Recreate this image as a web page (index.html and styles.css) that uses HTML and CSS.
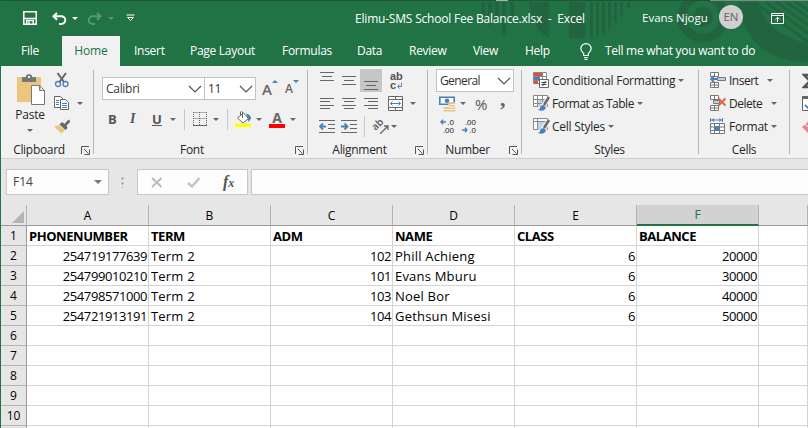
FILE: index.html
```html
<!DOCTYPE html>
<html lang="en">
<head>
<meta charset="utf-8">
<title>Elimu-SMS School Fee Balance.xlsx - Excel</title>
<link rel="stylesheet" href="styles.css">
</head>
<body>
<div class="window">
  <header class="top">
    <svg class="art" width="808" height="66" viewBox="0 0 808 66" fill="#226440">
      <path d="M481 2h4v14h-4zM488 2h4v23h-4zM495 2h4v18h-4zM502 2h4v32h-4zM510 2h4v14h-4z"/>
      <path d="M529 2h20v36q-16-8-20-36zM569 2h16v36h-16zM590 2h3v37h-3zM596 2h3v35h-3zM602 2h3v33h-3zM608 2h3v27h-3zM614 2h3v20h-3zM620 2h3v13h-3zM627 2h3v6h-3z"/>
      <circle cx="703" cy="17" r="21" fill="none" stroke="#226440" stroke-width="9"/><circle cx="703" cy="17" r="10"/>
      <path d="M738 2h20q6 30 50 42v18q-60 0-70-60z"/>
      <path d="M766 2l46 34M776 2l36 26M786 2l26 18M796 2l16 11M754 2l58 43" stroke="#226440" stroke-width="3"/>
      <path d="M0 0h808v1H0z" fill="#1d5636"/><path d="M710 0h98v1h-98z" fill="#7d8d8d"/><path d="M496 0h12v1h-12z" fill="#a9b3ac"/>
    </svg>
    <div class="titlebar">
      <svg width="14" height="14" viewBox="0 0 14 14" fill="none" stroke="#fff" stroke-width="1.5"><path d="M.8.8h12.4v12.4H.8zM.8 7.5h12.4"/><path d="M3.7 13v-3.5h6.6V13M6 10.5V13"/></svg>
      <svg width="15" height="13" viewBox="0 0 15 13" fill="none" stroke="#fff" stroke-width="2"><path d="M5 1L1.5 4.3 5 7.8M2 4.3h7.3a4 3.8 0 010 7.6H7"/></svg>
      <i class="caret white"></i>
      <svg class="faded" width="15" height="13" viewBox="0 0 15 13" fill="none" stroke="#fff" stroke-width="2"><path d="M10 1l3.5 3.3L10 7.8M13 4.3H5.7a4 3.8 0 000 7.6H8"/></svg>
      <i class="caret white faded"></i>
      <svg width="9" height="8" viewBox="0 0 9 8" fill="none" stroke="#fff"><path d="M.5 1h8M1.5 3.5h6l-3 3z"/></svg>
      <span class="doc">Elimu-SMS School Fee Balance.xlsx&nbsp; -&nbsp; Excel</span>
      <span class="user">Evans Njogu</span>
      <span class="avatar">EN</span>
      <svg width="13" height="11" viewBox="0 0 13 11" fill="none" stroke="#fff"><path d="M.5.5h12v10H.5zM.5 2.5h12M6.500 9V4.500M4.300 6.500l2.200-2.200 2.200 2.200"/></svg>
    </div>
    <nav class="tabs">
      <span class="file">File</span><span class="active">Home</span><span class="insert">Insert</span><span class="layout">Page Layout</span><span class="formulas">Formulas</span><span class="data">Data</span><span class="review">Review</span><span class="view">View</span><span class="help">Help</span>
      <svg width="12" height="17" viewBox="0 0 12 17" fill="none" stroke="#fff" stroke-width="1.2"><path d="M3.700 12.500v-2C1.500 8.500.8 7.500.8 5.600a5.200 4.900 0 0110.400 0c0 1.900-.7 2.900-2.900 4.900v2zM4 14.500h4M4.500 16.300h3"/></svg>
      <span class="tell">Tell me what you want to do</span>
    </nav>
  </header>

  <section class="ribbon">
    <div class="group clipboard">
      <div class="body">
        <div class="paste">
          <svg width="29" height="31" viewBox="0 0 29 31"><path fill="#ecc67d" d="M0 3h24v25H0z"/><path fill="#777" d="M5 3h4V1.500Q12-1.500 15 1.500V3h4v5H5z"/><path fill="#f1f1f1" d="M11 2h2v2h-2z"/><path fill="#fff" stroke="#777" d="M14.500 11.500h8l5 5v14h-13zM22.500 11.500v5h5"/></svg>
          <span class="t">Paste</span><i class="caret"></i>
        </div>
        <div class="tools">
          <svg width="16" height="16" viewBox="0 0 16 16" fill="none"><path d="M3.500 1L10 10M12 1L5.500 10" stroke="#666" stroke-width="2"/><circle cx="4" cy="12" r="2.500" stroke="#4a80ba" stroke-width="1.300"/><circle cx="11.500" cy="12" r="2.500" stroke="#4a80ba" stroke-width="1.300"/></svg>
          <div class="copy"><svg width="16" height="15" viewBox="0 0 16 15" fill="#fff" stroke="#666"><path d="M.5.5h6l3 3v8h-9z"/><path d="M2 4.500h3M2 6.500h3M2 8.500h3" stroke="#4a80ba"/><path d="M6.500 3.500h5l3 3v7h-8z"/><path d="M8 7.500h5M8 9.500h5M8 11.500h5" stroke="#4a80ba"/></svg><i class="caret"></i></div>
          <svg width="17" height="15" viewBox="0 0 17 15"><path fill="#ecc67d" d="M0 7.500l5-1.500 6 5-3.500 3.500z"/><path fill="#666" d="M5.500 5.500L8 3l2.500 2 3-3.500L15.500.5 16 3l-3.500 3.500L13.500 9 11.500 11z"/></svg>
        </div>
      </div>
      <footer><span>Clipboard</span><svg class="launch" viewBox="0 0 9 9"><path d="M.5 8V.5H8M3 3l4.500 4.500M8.500 3.500v5h-5"/></svg></footer>
    </div>

    <div class="group font">
      <div class="body">
        <div class="row combos">
          <span class="combo"><b>Calibri</b><svg class="chev" viewBox="0 0 14 8"><path d="M1 1l6 6 6-6"/></svg></span>
          <span class="combo"><b>11</b><svg class="chev" viewBox="0 0 14 8"><path d="M1 1l6 6 6-6"/></svg></span>
          <span class="grow">A<i class="tri up"></i></span><span class="grow small">A<i class="tri down"></i></span>
        </div>
        <div class="row format">
          <b class="gl">B</b><b class="gl it">I</b><b class="gl ul">U</b><i class="caret"></i><i class="sep"></i>
          <svg width="14" height="14" viewBox="0 0 14 14" fill="none" stroke="#666" stroke-dasharray="1 1"><path d="M.5.500h13M.5 6.500h13M.5 0v13M6.500 0v13M13.500 0v13"/><path stroke-dasharray="none" d="M0 13.500h14"/></svg><i class="caret"></i><i class="sep"></i>
          <svg width="17" height="16" viewBox="0 0 17 16"><path fill="#fff" stroke="#666" d="M2.500 7l6-5 5 5.500-5.500 4.500zM7.500 7V1q-1-1.500-2 0v3"/><path fill="#4a80ba" d="M11 2.500q5 1 5 5l-2.500 3.500q-.5-4-2.500-8.500z"/><path fill="#ff0" d="M0 12.500h16v4H0z"/></svg><i class="caret"></i>
          <span class="fontcolor">A</span><i class="caret"></i>
        </div>
      </div>
      <footer><span>Font</span><svg class="launch" viewBox="0 0 9 9"><path d="M.5 8V.5H8M3 3l4.500 4.500M8.500 3.500v5h-5"/></svg></footer>
    </div>

    <div class="group align">
      <div class="body">
        <div class="row r1">
          <svg class="ln" viewBox="0 0 14 23"><path d="M0 3.500h14M2 7.500h10M0 11.500h14"/></svg>
          <svg class="ln" viewBox="0 0 14 23"><path d="M0 7.500h14M2 11.500h10M0 15.500h14"/></svg>
          <span class="on"><svg class="ln" viewBox="0 0 14 23"><path d="M0 12.500h14M2 16.500h10M0 20.500h14"/></svg></span>
          <span class="wrap"><span>ab</span><span>c<svg width="6" height="6" viewBox="0 0 6 6"><path fill="none" stroke="#4a80ba" d="M4.500 0v3.500H1M2.500 1.500l-2 2 2 2"/></svg></span></span>
        </div>
        <div class="row r2">
          <svg class="ln s" viewBox="0 0 14 13"><path d="M0 1.500h14M0 4.500h10M0 8.500h14M0 11.500h10"/></svg>
          <svg class="ln s" viewBox="0 0 14 13"><path d="M0 1.500h14M2 4.500h10M0 8.500h14M2 11.500h10"/></svg>
          <svg class="ln s" viewBox="0 0 14 13"><path d="M0 1.500h14M4 4.500h10M0 8.500h14M4 11.500h10"/></svg>
          <svg width="15" height="15" viewBox="0 0 15 15" fill="#fff" stroke="#666"><path d="M.5.500h14v14H.5zM.5 3.500h14M.5 11.500h14M7.500.500v3M7.500 11.500v3"/><path d="M2.500 7.500h10M4.500 5.500l-2 2 2 2M10.500 5.500l2 2-2 2" fill="none" stroke="#4a80ba"/></svg><i class="caret"></i>
        </div>
        <div class="row r3">
          <svg width="16" height="13" viewBox="0 0 16 13" fill="none" stroke="#666"><path d="M0 .500h16M9 4.500h7M9 8.500h7M0 12.500h16"/><path d="M1.500 6.500H7M4 3.500l-3 3 3 3" stroke="#4a80ba" stroke-width="1.800"/></svg>
          <svg width="16" height="13" viewBox="0 0 16 13" fill="none" stroke="#666"><path d="M0 .500h16M9 4.500h7M9 8.500h7M0 12.500h16"/><path d="M0 6.500h6M3.500 3.500l3 3-3 3" stroke="#4a80ba" stroke-width="1.800"/></svg>
          <i class="sep"></i>
          <span class="orient"><em>ab</em><svg width="9" height="9" viewBox="0 0 9 9"><path fill="none" stroke="#666" stroke-width="1.300" d="M0 9l8-8M4 1h4v4"/></svg></span><i class="caret"></i>
        </div>
      </div>
      <footer><span>Alignment</span><svg class="launch" viewBox="0 0 9 9"><path d="M.5 8V.5H8M3 3l4.500 4.500M8.500 3.500v5h-5"/></svg></footer>
    </div>

    <div class="group number">
      <div class="body">
        <span class="combo"><b>General</b><svg class="chev" viewBox="0 0 14 8"><path d="M1 1l6 6 6-6"/></svg></span>
        <div class="row n2">
          <svg width="17" height="16" viewBox="0 0 17 16"><path fill="#fff" stroke="#4a80ba" stroke-width="1.600" d="M.8 1.300h14.400v7H.8z"/><circle cx="8" cy="4.800" r="2.300" fill="#4a80ba"/><path fill="#ecc67d" d="M10 6h6v5h-6zM4.500 11h6v4.500h-6zM10.500 11.500h6v4h-6z"/><path stroke="#f1f1f1" d="M9.500 8.500h7M4 13.500h13M9.500 11h7"/></svg><i class="caret"></i>
          <span class="pct">%</span><span class="comma">,</span>
        </div>
        <div class="row n3">
          <span class="dec"><span><svg width="6" height="6" viewBox="0 0 6 6"><path d="M6 3H1M3 .800L1 3l2 2.200"/></svg>.0</span><span>.00</span></span>
          <span class="dec"><span>.00</span><span><svg width="6" height="6" viewBox="0 0 6 6"><path d="M0 3h5M3 .800L5 3 3 5.200"/></svg>.0</span></span>
        </div>
      </div>
      <footer><span>Number</span><svg class="launch" viewBox="0 0 9 9"><path d="M.5 8V.5H8M3 3l4.500 4.500M8.500 3.500v5h-5"/></svg></footer>
    </div>

    <div class="group styles">
      <div class="body list">
        <div><svg width="17" height="17" viewBox="0 0 17 17"><path fill="#fff" stroke="#888" d="M.5.500h13v11H.5zM9.500.500v8M.5 4.500h13M.5 8.500h8"/><path fill="#d8533a" d="M1 1h8v3H1zM1 9h4v3H1z"/><path fill="#4a80ba" d="M1 5h6v3H1z"/><path fill="#fff" stroke="#666" d="M6.500 7.500h9v8h-9z"/><path fill="none" stroke="#444" d="M8.500 10.500h5M8.500 12.500h5M12.500 9l-3 5"/></svg><span class="t cond">Conditional Formatting</span><i class="caret"></i></div>
        <div><svg width="17" height="17" viewBox="0 0 17 17"><path fill="#fff" stroke="#888" d="M.5.500h14v11H.5z"/><path fill="#c0d3e8" d="M5 4h9v8H5z"/><path fill="none" stroke="#888" d="M.5 4.500h14M.5 8.500h14M4.500.500v11M9.500.500v11"/><path stroke="#f1f1f1" stroke-width="5" d="M16 3l-6 8"/><path stroke="#666" stroke-width="2.500" d="M16 2l-5 8"/><path fill="#4a80ba" d="M5 15q2-1 3-4l3-1 2 3q-2 4-8 2z"/></svg><span class="t fat">Format as Table</span><i class="caret"></i></div>
        <div><svg width="17" height="17" viewBox="0 0 17 17"><path fill="#fff" stroke="#888" d="M.5.500h14v11H.5z"/><path fill="#c0d3e8" d="M5 4h9v8H5z"/><path fill="none" stroke="#888" d="M.5 3.500h14M4.500.500v11"/><path stroke="#f1f1f1" stroke-width="5" d="M16 3l-6 8"/><path stroke="#666" stroke-width="2.500" d="M16 2l-5 8"/><path fill="#4a80ba" d="M5 15q2-1 3-4l3-1 2 3q-2 4-8 2z"/></svg><span class="t cs">Cell Styles</span><i class="caret"></i></div>
      </div>
      <footer><span>Styles</span></footer>
    </div>

    <div class="group cells">
      <div class="body list">
        <div><svg width="17" height="17" viewBox="0 0 17 17"><path fill="#fff" stroke="#777" d="M.5.500h8v4h-8zM.5 10.500h8v5h-8zM4.500.500v4M4.500 10.500v5M.5 13h8"/><path fill="#c0d3e8" stroke="#777" d="M7.500 5.500h8v3h-8z"/><path fill="none" stroke="#4a80ba" stroke-width="1.800" d="M7 7H1M4 4L1 7l3 3"/></svg><span class="t ins">Insert</span><i class="caret"></i></div>
        <div><svg width="17" height="17" viewBox="0 0 17 17"><path fill="#fff" stroke="#777" d="M.5.500h8v4h-8zM.5 10.500h8v5h-8zM4.500.500v4M4.500 10.500v5M.5 13h8"/><path fill="#c0d3e8" stroke="#777" d="M3.500 5.500h6v3h-6z"/><path stroke="#e0623c" stroke-width="1.800" d="M8.500 3.500l7 7M15.500 3.500l-7 7"/></svg><span class="t del">Delete</span><i class="caret"></i></div>
        <div><svg width="17" height="17" viewBox="0 0 17 17"><path fill="#fff" stroke="#777" d="M.5 5.500h14v10H.5zM4.500 5.500v10M9.500 5.500v10M.5 9h14M.5 12.500h14"/><path fill="#4a80ba" d="M4 8h5v5H4z"/><path fill="none" stroke="#4a80ba" d="M.5 0v4M12.500 0v4M1 2h11M4 .500L2 2l2 1.500M9 .500L11 2 9 3.500"/></svg><span class="t form">Format</span><i class="caret"></i></div>
      </div>
      <footer><span>Cells</span></footer>
    </div>

    <div class="group editing">
      <div class="body list">
        <div><svg width="14" height="16" viewBox="0 0 14 16"><path fill="none" stroke="#555" stroke-width="2.500" d="M12 2H2l6 6-6 6h10"/></svg></div>
        <div><svg width="14" height="16" viewBox="0 0 14 16"><path fill="#fff" stroke="#666" d="M.5.500h13v14H.5z"/><path fill="#666" d="M0 0h14v3H0z"/><path fill="none" stroke="#4a80ba" stroke-width="1.800" d="M3 9l3 3 6-6"/></svg></div>
        <div><svg width="14" height="16" viewBox="0 0 14 16"><path fill="#e8839a" d="M0 8l7-6 7 5-8 7z"/><path stroke="#fff" d="M3 5l6 6"/></svg></div>
      </div>
    </div>
  </section>

  <section class="formula">
    <div class="namebox"><span>F14</span><i class="caret"></i></div>
    <div class="dots"></div>
    <div class="fx">
      <svg width="12" height="11" viewBox="0 0 12 11"><path fill="none" stroke="#bbb" stroke-width="2" d="M1 1l9.500 9M10.500 1L1 10"/></svg>
      <svg width="14" height="11" viewBox="0 0 14 11"><path fill="none" stroke="#c4c4c4" stroke-width="2.500" d="M1 6l4 3.500L12.500 1"/></svg>
      <span>f<small>x</small></span>
    </div>
    <div class="input"></div>
  </section>

  <table class="sheet">
    <colgroup><col class="rh"><col class="c"><col class="c"><col class="c"><col class="c"><col class="c"><col class="c"><col></colgroup>
    <thead><tr><th class="corner"><svg width="12" height="12" viewBox="0 0 12 12"><path fill="#b4b4b4" d="M12 0v12H0z"/></svg></th><th>A</th><th>B</th><th>C</th><th>D</th><th>E</th><th class="sel">F</th><th></th></tr></thead>
    <tbody>
      <tr class="bold"><th>1</th><td>PHONENUMBER</td><td>TERM</td><td>ADM</td><td>NAME</td><td>CLASS</td><td>BALANCE</td><td></td></tr>
      <tr><th>2</th><td class="n">254719177639</td><td>Term 2</td><td class="n">102</td><td>Phill Achieng</td><td class="n">6</td><td class="n">20000</td><td></td></tr>
      <tr><th>3</th><td class="n">254799010210</td><td>Term 2</td><td class="n">101</td><td>Evans Mburu</td><td class="n">6</td><td class="n">30000</td><td></td></tr>
      <tr><th>4</th><td class="n">254798571000</td><td>Term 2</td><td class="n">103</td><td>Noel Bor</td><td class="n">6</td><td class="n">40000</td><td></td></tr>
      <tr><th>5</th><td class="n">254721913191</td><td>Term 2</td><td class="n">104</td><td>Gethsun Misesi</td><td class="n">6</td><td class="n">50000</td><td></td></tr>
      <tr><th>6</th><td></td><td></td><td></td><td></td><td></td><td></td><td></td></tr>
      <tr><th>7</th><td></td><td></td><td></td><td></td><td></td><td></td><td></td></tr>
      <tr><th>8</th><td></td><td></td><td></td><td></td><td></td><td></td><td></td></tr>
      <tr><th>9</th><td></td><td></td><td></td><td></td><td></td><td></td><td></td></tr>
      <tr><th>10</th><td></td><td></td><td></td><td></td><td></td><td></td><td></td></tr>
      <tr><th></th><td></td><td></td><td></td><td></td><td></td><td></td><td></td></tr>
    </tbody>
  </table>
</div>
</body>
</html>
```
FILE: styles.css
```css
* { box-sizing: border-box; }
body { margin: 0; overflow: hidden; font: 12px/16px "Open Sans", "Noto Sans", sans-serif; color: #262626; }
.window { width: 808px; height: 428px; overflow: hidden; background: #e6e6e6; border-left: 1px solid #217346; }
svg { display: block; flex: none; }
i { font-style: normal; }

.top { position: relative; height: 66px; background: #217346; color: #fff; margin-left: -1px; }
.art { position: absolute; inset: 0; }
.titlebar { position: relative; height: 36px; display: grid; align-items: center; padding-left: 23px;
  grid-template-columns: 29px 20px 15px 21px 18px 229px 287px 77px 52px 13px; font-size: 11.5px; white-space: nowrap; }
.doc { font-size: 12px; letter-spacing: -0.2px; padding-top: 1px; }
.avatar { width: 24px; height: 24px; border-radius: 50%; background: #d0d0d0; color: #666; text-align: center; line-height: 24px; margin-top: -2px; }
.faded { opacity: .25; }
.tabs { position: relative; height: 30px; display: grid; align-items: center; white-space: nowrap; padding-left: 21px; letter-spacing: -.28px;
  grid-template-columns: 41px 72px 56px 92px 75px 52px 64px 52px 55px 25px 1fr; }
.tabs .active { background: #f1f1f1; color: #217346; width: 58px; height: 30px; line-height: 30px; text-align: center; letter-spacing: -.1px; }

.caret { flex: none; width: 0; height: 0; border: 3px solid transparent; border-top-color: #666; border-bottom: 0; }
.caret.white { border-top-color: #fff; }

.ribbon { height: 93px; background: #f1f1f1; border-bottom: 1px solid #cfcfcf; display: flex; padding-top: 4px; }
.group { flex: none; height: 84px; border-right: 1px solid #b5b5b5; display: flex; flex-direction: column; }
.body { flex: none; height: 72px; }
.group footer { flex: none; height: 16px; display: flex; justify-content: center; position: relative; letter-spacing: -.3px; }
.launch { position: absolute; right: 3px; top: 4px; width: 9px; height: 9px; fill: none; stroke: #555; }
.row { display: grid; align-items: center; }
.clipboard { width: 93px; }
.clipboard footer { padding-right: 16px; }
.font { width: 214px; }
.font footer { padding-right: 17px; }
.align { width: 120px; }
.align footer { padding-right: 16px; }
.number { width: 94px; }
.number footer { padding-right: 14px; }
.styles { width: 177px; }
.styles footer { padding-right: 1px; }
.cells { width: 91px; }
.editing { width: 24px; border: 0; }

.clipboard .body { display: flex; }
.paste { width: 53px; padding: 4px 0 0 0; display: flex; flex-direction: column; align-items: center; }
.paste svg { margin-left: 7px; }
.paste .t { margin: 2px 0 6px 5px; letter-spacing: -.2px; }
.paste .caret { margin-left: 4px; }
.tools { display: flex; flex-direction: column; padding-top: 2px; gap: 8px; }
.copy { display: flex; align-items: center; gap: 7px; }

.combo { height: 23px; border: 1px solid #c3c3c3; background: #fff; display: flex; align-items: center; justify-content: space-between; padding: 0 2px 0 3px; }
.combo b { font-weight: 400; color: #333; letter-spacing: -.3px; }
.chev { width: 14px; height: 8px; fill: none; stroke: #555; stroke-width: 1.2; }
.combos { padding: 7px 0 0 8px; grid-template-columns: 103px 51px; justify-content: start; grid-auto-flow: column; grid-auto-columns: 23px; }
.combos .combo + .combo { border-left: 0; }
.grow { font-size: 15px; font-weight: 600; color: #666; display: flex; padding-left: 6px; }
.grow.small { font-size: 12px; }
.tri { border: 3px solid transparent; height: 0; width: 0; margin-top: -1px; }
.up { border-bottom-color: #4a80ba; border-top: 0; }
.down { border-top-color: #4a80ba; border-bottom: 0; }
.format { height: 22px; margin-top: 8px; padding-left: 14px; grid-template-columns: 22px 22px 18px 14px 9px 20px 14px 8px 21px 13px 21px 6px; }
.gl { color: #555; font-size: 13px; }
.it { font: italic bold 14px "Liberation Serif", serif; }
.ul { text-decoration: underline; }
.sep { width: 1px; height: 21px; background: #c8c8c8; }
.fontcolor { width: 16px; height: 17px; border-bottom: 4px solid red; text-align: center; font: bold 14px/13px "Open Sans", sans-serif; color: #666; }

.ln { width: 14px; height: 23px; fill: none; stroke: #666; }
.ln.s { height: 13px; }
.align .body { padding-left: 12px; }
.r1 { height: 23px; margin-top: -1px; grid-template-columns: 22px 18px 30px 14px; }
.on { background: #c6c6c6; width: 22px; padding-left: 4px; }
.wrap { display: flex; flex-direction: column; font: bold 11px/9px "Liberation Sans", sans-serif; color: #555; }
.wrap svg { display: inline-block; margin-left: 1px; }
.r2 { height: 23px; grid-template-columns: 22px 22px 24px 22px 6px; }
.r3 { height: 23px; margin-left: -1px; grid-template-columns: 22px 23px 8px 19px 6px; }
.orient { position: relative; height: 16px; width: 17px; }
.orient em { position: absolute; left: -1px; top: -2px; font: 600 10px/14px "Open Sans", sans-serif; transform: rotate(-45deg); color: #555; }
.orient svg { position: absolute; left: 8px; top: 6px; }

.number .body { padding-left: 8px; }
.number .combo { width: 78px; margin-top: -1px; }
.number .combo b { letter-spacing: -.6px; }
.n2 { height: 23px; padding-left: 3px; grid-template-columns: 21px 15px 25px 8px; }
.pct { font-size: 15px; color: #555; }
.comma { font: bold 22px/8px "Liberation Serif", serif; color: #666; margin-top: -10px; }
.n3 { height: 23px; padding-left: 2px; grid-template-columns: 22px 16px; }
.dec { display: flex; flex-direction: column; align-items: flex-end; width: 16px; font: 8px/8px "Liberation Sans", sans-serif; color: #222; }
.dec span { display: flex; }
.dec svg { fill: none; stroke: #4a80ba; stroke-width: 1.4; margin-right: 1px; }

.list { padding-left: 11px; }
.list div { height: 23px; display: flex; align-items: center; white-space: nowrap; position: relative; top: -1px; }
.list svg { margin-right: 2px; }
.list .t { margin-right: 3px; letter-spacing: -.25px; }
.list .fat { letter-spacing: -.5px; }
.list .ins { margin-right: 9px; letter-spacing: -.5px; }
.list .del { margin-right: 9px; letter-spacing: -.5px; }
.editing .list { padding-left: 12px; }

.formula { height: 46px; padding: 10px 0 10px 5px; display: flex; }
.formula > div { background: #fdfdfd; border: 1px solid #c6c6c6; height: 26px; }
.namebox { width: 103px; display: flex; align-items: center; justify-content: space-between; padding: 0 6px; color: #444; }
.formula .namebox .caret { border-width: 4px 4px 0; border-top-color: #777; }
.formula .dots { width: 3px; height: 12px; margin: 7px 13px 0 12px; border: 0; background: radial-gradient(circle, #aaa 1px, transparent 1.200px) 0 0 / 3px 5px; }
.fx { width: 111px; display: grid; align-items: center; grid-template-columns: 36px 36px 20px; padding-left: 13px; }
.fx span { font: italic bold 16px/18px "Liberation Serif", serif; color: #555; }
.fx small { font-size: 12px; }
.input { flex: 1; margin-left: 3px; border-right: 0 !important; }

.sheet { border-collapse: separate; border-spacing: 0; table-layout: fixed; width: 807px; color: #000; font-size: 12px; white-space: nowrap; }
.rh { width: 26px; }
.c { width: 122px; }
.sheet tr { height: 20px; }
.sheet th, .sheet td { padding: 1px 2px 0; height: 20px; line-height: 18px; border-right: 1px solid #d4d4d4; border-bottom: 1px solid #d4d4d4; }
.sheet td { background: #fff; text-align: left; font-size: 13px; letter-spacing: .2px; }
.sheet .n { text-align: right; padding-right: 1px; letter-spacing: -.42px; }
.sheet th { font-weight: 400; background: #e6e6e6; text-align: center; border-color: #b4b4b4; }
.sheet tbody th { border-right-color: #999; }
.sheet thead th { border-bottom-color: #999; }
.sheet .corner svg { margin: 3px 0 0 9px; }
.sheet .sel { background: #d2d2d2; color: #217346; border-bottom: 2px solid #217346; }
.sheet .bold td { font-weight: 700; letter-spacing: -.45px; }
```
